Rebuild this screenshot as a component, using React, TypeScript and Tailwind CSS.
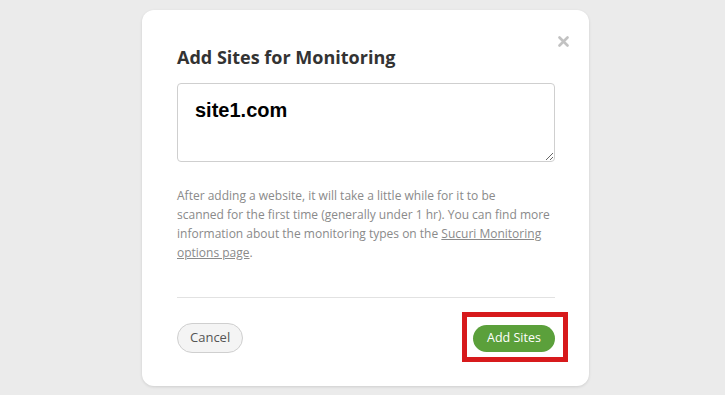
import React, { useState } from "react";

const CloseIcon = () => (
  <svg width="11" height="11" viewBox="0 0 11 11" aria-hidden="true">
    <path d="M1.5 1.5 L9.5 9.5 M9.5 1.5 L1.5 9.5" stroke="#c2c2c2" strokeWidth="2.6" strokeLinecap="round" />
  </svg>
);

const App = () => {
  const [sites, setSites] = useState("site1.com");

  return (
    <div className="w-[725px] h-[395px] bg-[#ebebeb] flex pl-[142px] pt-[10px] font-['Open_Sans',sans-serif]">
      <div className="relative w-[447px] h-[376px] bg-white rounded-[12px] shadow-[0_1px_3px_rgba(0,0,0,0.12)] px-[35px] pt-[34px] flex flex-col">
        <button type="button" className="absolute right-[18px] top-[24px] p-0.5">
          <CloseIcon />
        </button>
        <h1 className="text-[18px] leading-[24px] font-bold text-[#333] mt-[1px]">Add Sites for Monitoring</h1>

        <textarea
          className="mt-[14px] w-[378px] h-[79px] border border-[#cfcfcf] rounded-[4px] px-[17px] pt-[14px] text-[20px] leading-[24px] font-bold text-black font-['Liberation_Sans',Arial,sans-serif] outline-none resize-y"
          value={sites}
          onChange={(e) => setSites(e.target.value)}
        />

        <p className="mt-[24px] text-[12px] leading-[19px] text-[#8a8a8a] w-[378px]">
          After adding a website, it will take a little while for it to be
          <br />
          scanned for the first time (generally under 1 hr). You can find more information about the monitoring
          types on the{" "}
          <a href="#" className="underline text-[#8a8a8a]">
            Sucuri Monitoring options page
          </a>
          .
        </p>

        <div className="mt-[35px] border-t border-[#e2e2e2] w-[378px]" />

        <div className="mt-[25px] w-[378px] flex items-center justify-between">
          <button
            type="button"
            className="h-[30px] px-[12px] rounded-full border border-[#cfcfcf] bg-[#f4f4f4] text-[13px] text-[#555]"
          >
            Cancel
          </button>
          <div className="relative">
            <button
              type="submit"
              className="h-[27px] w-[82px] rounded-full bg-[#5ba03b] text-[12.5px] font-medium text-white"
            >
              Add Sites
            </button>
            <span className="pointer-events-none absolute left-[-11px] right-[-13px] top-[-12px] bottom-[-10px] border-[5px] border-[#d71a1c]" />
          </div>
        </div>
      </div>
    </div>
  );
};

export default App;
